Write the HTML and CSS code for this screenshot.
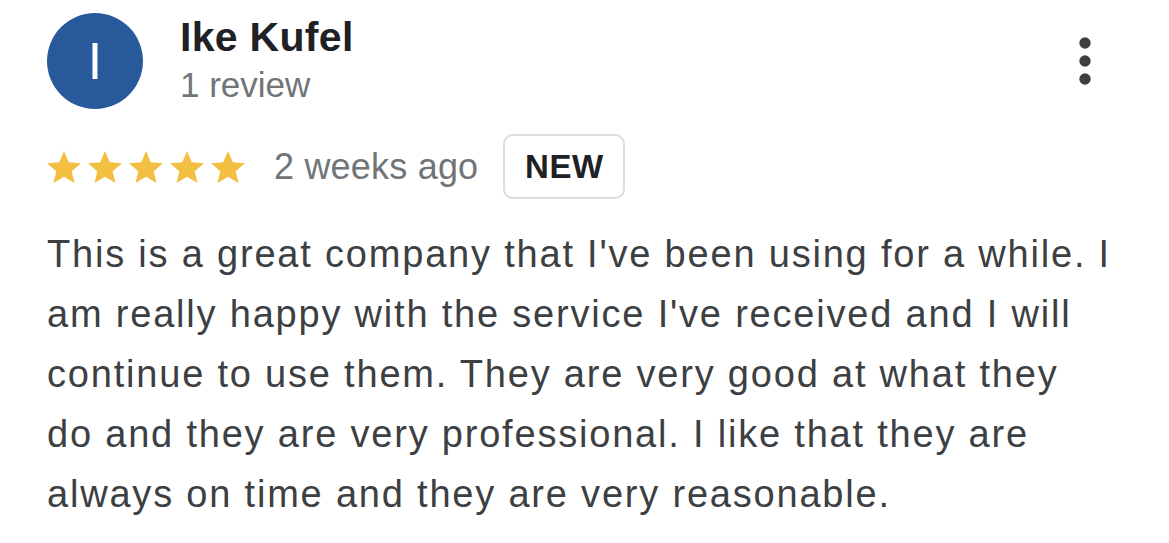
FILE: index.html
```html
<!DOCTYPE html>
<html>
<head>
<meta charset="utf-8">
<link rel="stylesheet" href="styles.css">
</head>
<body>
<div class="review">
  <div class="header">
    <div class="avatar">I</div>
    <div class="who">
      <div class="name">Ike Kufel</div>
      <div class="count">1 review</div>
    </div>
    <svg class="more" width="12" height="48" viewBox="0 0 12 48">
      <circle cx="6" cy="6" r="5.7"/>
      <circle cx="6" cy="24" r="5.7"/>
      <circle cx="6" cy="42" r="5.7"/>
    </svg>
  </div>
  <div class="meta">
    <div class="stars">
      <svg class="star" viewBox="2 2 20 19" preserveAspectRatio="none"><path d="M12 17.27L18.18 21l-1.64-7.03L22 9.24l-7.19-.61L12 2 9.19 8.63 2 9.24l5.46 4.73L5.82 21z"/></svg>
      <svg class="star" viewBox="2 2 20 19" preserveAspectRatio="none"><path d="M12 17.27L18.18 21l-1.64-7.03L22 9.24l-7.19-.61L12 2 9.19 8.63 2 9.24l5.46 4.73L5.82 21z"/></svg>
      <svg class="star" viewBox="2 2 20 19" preserveAspectRatio="none"><path d="M12 17.27L18.18 21l-1.64-7.03L22 9.24l-7.19-.61L12 2 9.19 8.63 2 9.24l5.46 4.73L5.82 21z"/></svg>
      <svg class="star" viewBox="2 2 20 19" preserveAspectRatio="none"><path d="M12 17.27L18.18 21l-1.64-7.03L22 9.24l-7.19-.61L12 2 9.19 8.63 2 9.24l5.46 4.73L5.82 21z"/></svg>
      <svg class="star" viewBox="2 2 20 19" preserveAspectRatio="none"><path d="M12 17.27L18.18 21l-1.64-7.03L22 9.24l-7.19-.61L12 2 9.19 8.63 2 9.24l5.46 4.73L5.82 21z"/></svg>
    </div>
    <span class="when">2 weeks ago</span>
    <span class="badge">NEW</span>
  </div>
  <p class="text">This is a great company that I've been using for a while. I am really happy with the service I've received and I will continue to use them. They are very good at what they do and they are very professional. I like that they are always on time and they are very reasonable.</p>
</div>
</body>
</html>
```

FILE: styles.css
```css
html, body {
  margin: 0;
  padding: 0;
  background: #ffffff;
}
body {
  font-family: "Liberation Sans", Arial, sans-serif;
}
.review {
  padding: 13px 0 0 47px;
}
.header {
  display: flex;
  align-items: flex-start;
  padding-right: 78px;
}
.avatar {
  width: 96px;
  height: 96px;
  border-radius: 50%;
  background: #28599b;
  color: #ffffff;
  font-size: 52px;
  line-height: 96px;
  text-align: center;
  flex: none;
}
.who {
  margin-left: 37px;
}
.name {
  font-size: 41px;
  font-weight: bold;
  line-height: 48px;
  color: #202124;
  letter-spacing: 0.3px;
}
.count {
  margin-top: 4px;
  font-size: 35px;
  line-height: 40px;
  color: #70757a;
}
.more {
  margin-left: auto;
  margin-top: 24px;
  fill: #3c4043;
}
.meta {
  display: flex;
  align-items: center;
  margin-top: 25px;
  height: 65px;
}
.stars {
  display: flex;
  gap: 7px;
}
.star {
  width: 34px;
  height: 32px;
  fill: #f2bf43;
}
.when {
  margin-left: 29px;
  font-size: 36px;
  letter-spacing: 0.2px;
  color: #70757a;
}
.badge {
  margin-left: 25px;
  box-sizing: border-box;
  height: 65px;
  width: 122px;
  border: 2px solid #dadce0;
  border-radius: 10px;
  display: flex;
  align-items: center;
  justify-content: center;
  font-size: 33px;
  font-weight: bold;
  letter-spacing: 0.5px;
  color: #202124;
}
.text {
  margin: 25px 0 0 0;
  width: 1066px;
  font-size: 38px;
  letter-spacing: 1.8px;
  line-height: 60px;
  color: #3c4043;
}
```
